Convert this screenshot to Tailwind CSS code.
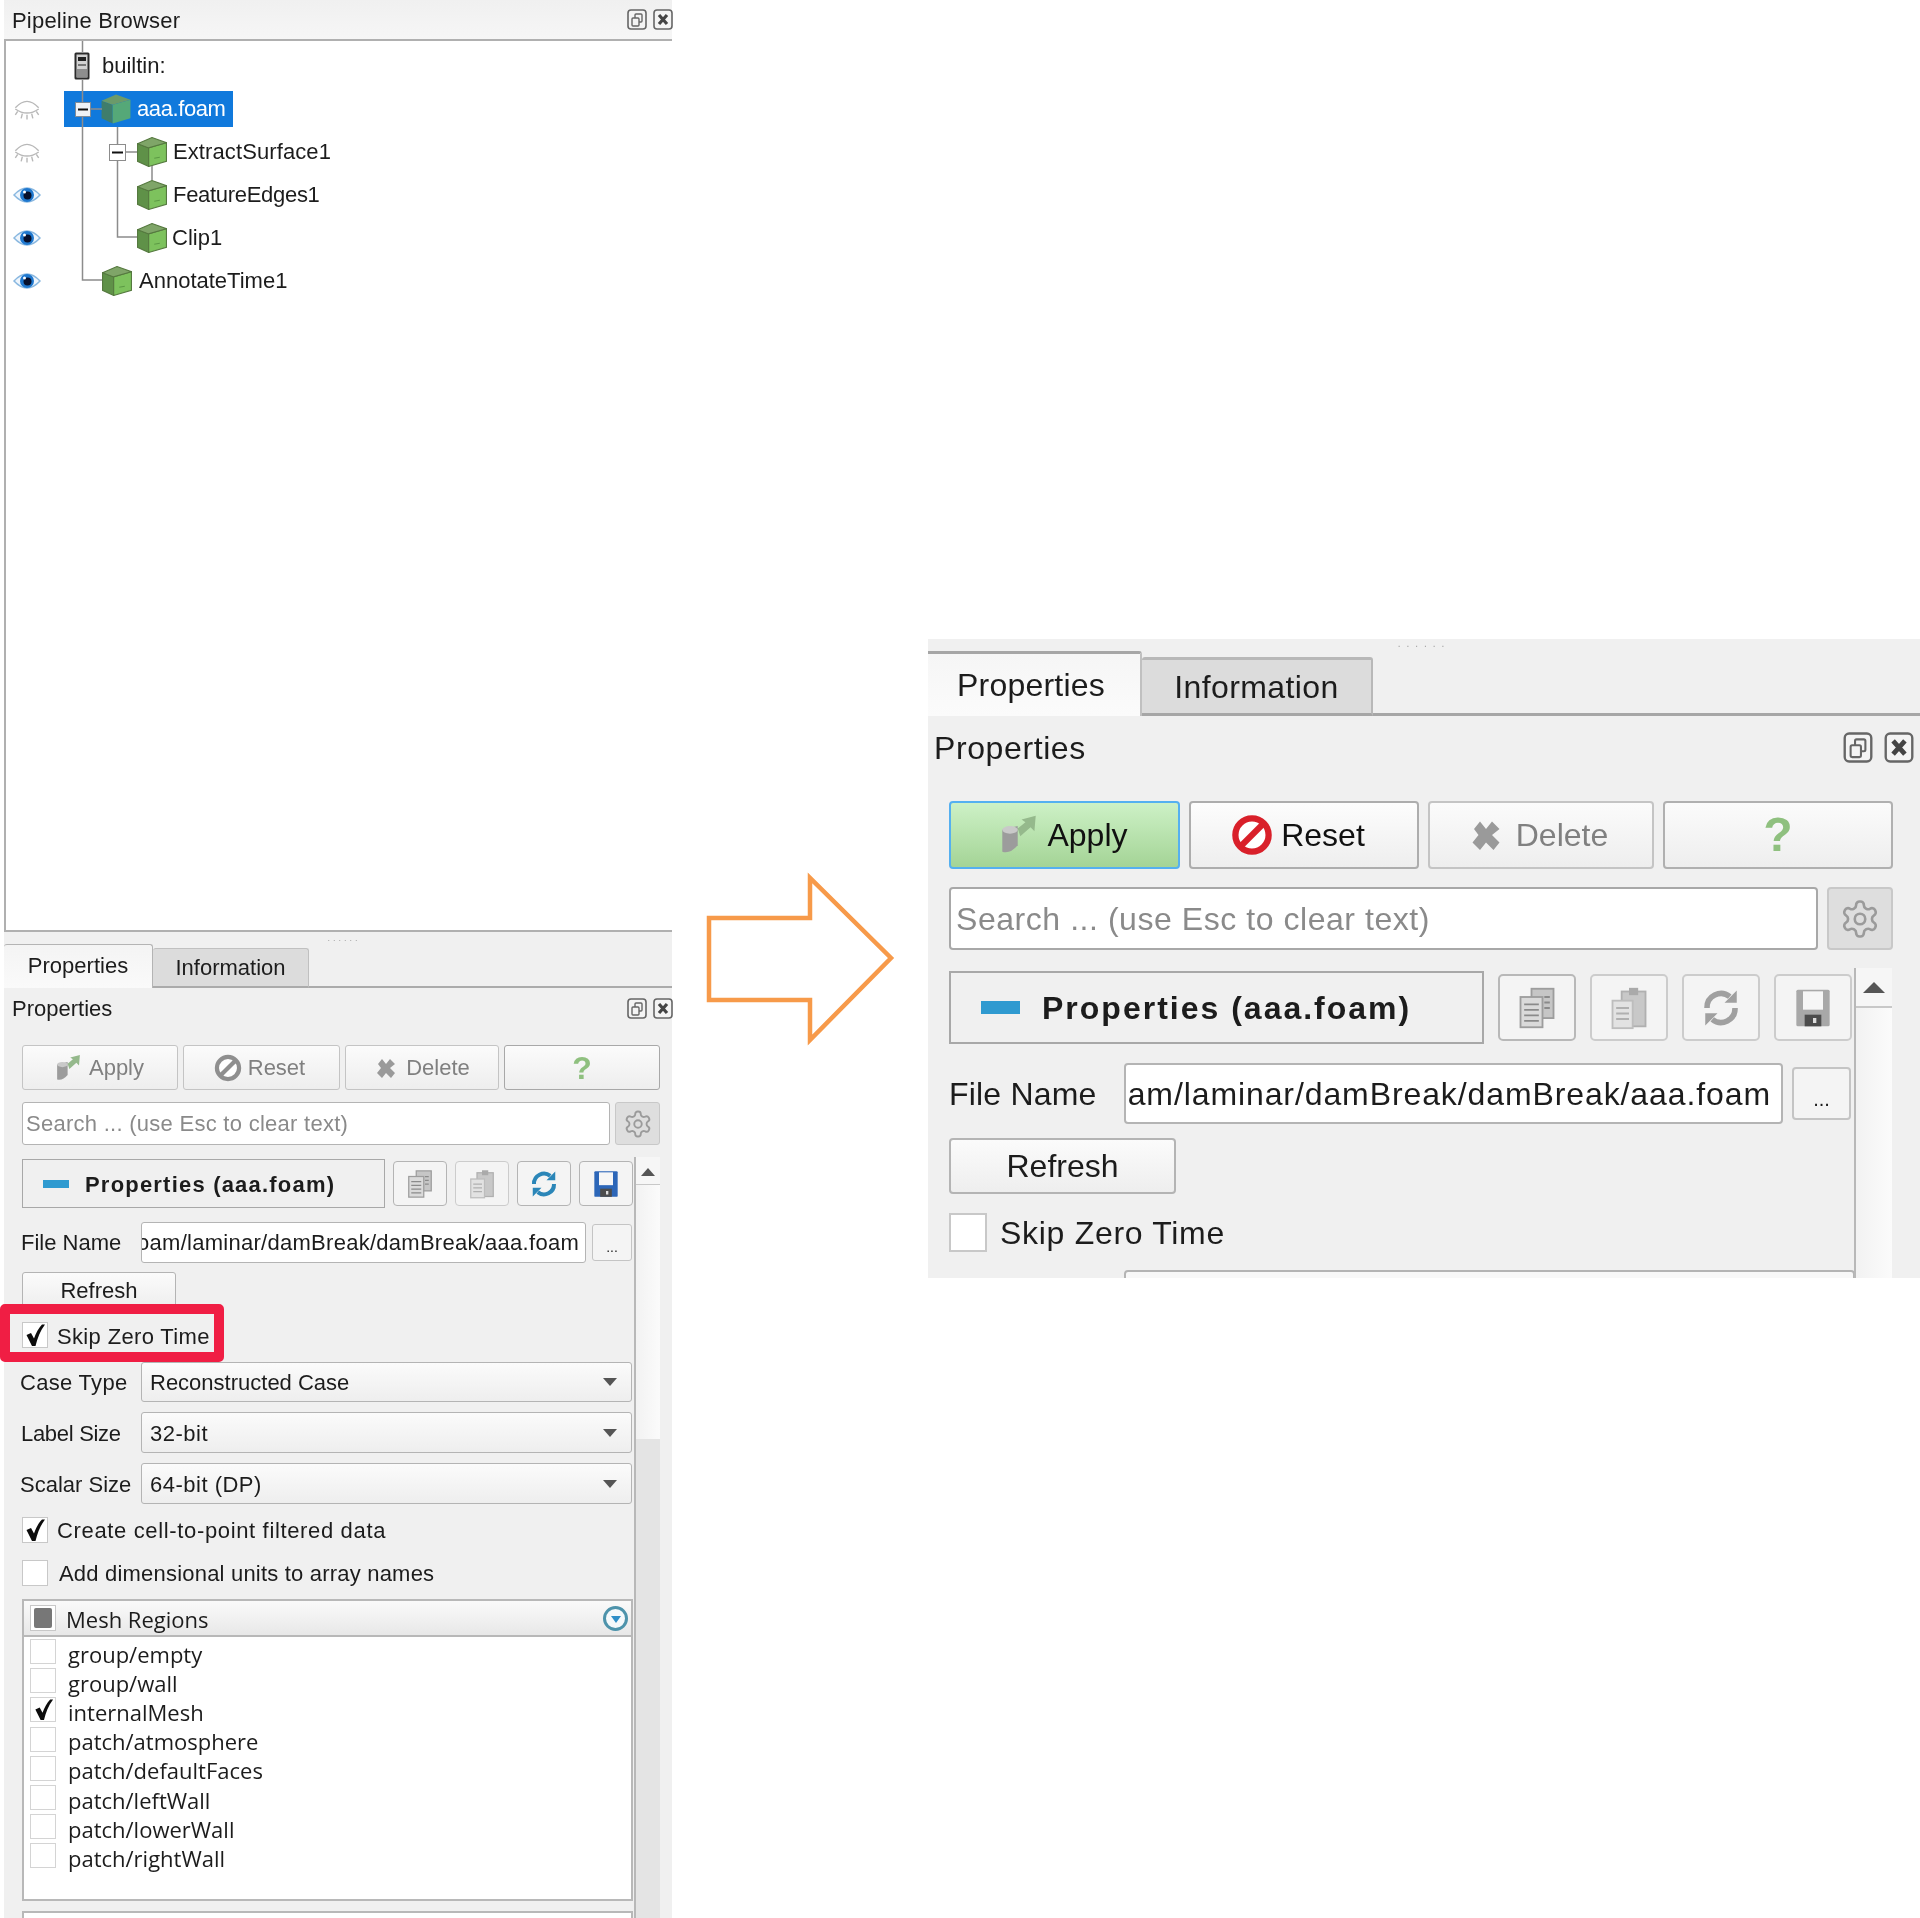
<!DOCTYPE html>
<html>
  <head>
    <meta charset="UTF-8" />
    <title>Pipeline Browser</title>
    <script src="https://cdn.jsdelivr.net/npm/@tailwindcss/browser@4"></script>
  </head>
  <body class="bg-white font-['Liberation_Sans',Arial,sans-serif] text-[#1c1c1c]">
    <!-- Shared icons -->
    <svg class="hidden" xmlns="http://www.w3.org/2000/svg">
      <defs>
        <symbol id="cube" viewBox="1.500 0.500 27 29" preserveAspectRatio="none">
          <polygon points="2,7 12,11 12,29 2,24" fill="#5f9148" stroke="#55793f" />
          <polygon points="12,11 28,6 28,24 12,29" fill="#7dc25d" stroke="#55793f" />
          <polygon points="2,7 15,1 28,6 12,11" fill="#7fa568" stroke="#55793f" />
          <path d="M17 21l5-1" stroke="#5c9a45" fill="none" />
        </symbol>
        <symbol id="cube-sel" viewBox="1.500 0.500 27 29" preserveAspectRatio="none">
          <polygon points="2,7 12,11 12,29 2,24" fill="#3f7d6c" />
          <polygon points="12,11 28,6 28,24 12,29" fill="#55a878" />
          <polygon points="2,7 15,1 28,6 12,11" fill="#6b9a6a" />
        </symbol>
        <symbol id="eye" viewBox="0 0 28 20">
          <path d="M1 10Q14-4 27 10 14 24 1 10Z" fill="#eef5fc" stroke="#8ab8e0" stroke-width="1.5" />
          <circle cx="14" cy="10" r="7" fill="#1f78cf" />
          <circle cx="14.5" cy="10.5" r="4" fill="#07102c" />
          <circle cx="11.5" cy="7" r="1.5" fill="#fff" />
        </symbol>
        <symbol id="eye-off" viewBox="0 0 24 24">
          <g fill="none" stroke="#b8b8b8" stroke-width="1.2">
            <path d="M2 11Q12 0 22 11" />
            <path d="M2 12Q12 19 22 12" />
            <path d="M4 14l-2 3M8 16l-1 4M12 17v4M16 16l1 4M20 14l2 3" />
          </g>
        </symbol>
        <symbol id="server" viewBox="0 0 16 28">
          <rect x="0.5" y="0.5" width="15" height="27" rx="1.5" fill="#2c2c2c" />
          <rect x="2.5" y="2.5" width="11" height="23" fill="#d2d2d2" />
          <rect x="4" y="5" width="8" height="4" fill="#222" />
          <rect x="4" y="12" width="8" height="2" fill="#777" />
          <rect x="3" y="17" width="10" height="8" fill="#8e8e8e" />
        </symbol>
        <symbol id="float" viewBox="0 0 20 21">
          <rect x="1" y="1" width="18" height="19" rx="3" fill="#f4f4f4" stroke="#666" stroke-width="1.6" />
          <rect x="8" y="5" width="7" height="8" rx="1" fill="none" stroke="#666" stroke-width="1.4" />
          <rect x="5" y="9" width="7" height="8" rx="1" fill="#f4f4f4" stroke="#666" stroke-width="1.4" />
        </symbol>
        <symbol id="close" viewBox="0 0 20 21">
          <rect x="1" y="1" width="18" height="19" rx="3" fill="#f4f4f4" stroke="#666" stroke-width="1.6" />
          <path d="M6 6l8 9M14 6l-8 9" stroke="#444" stroke-width="3.2" />
        </symbol>
        <symbol id="check" viewBox="0 0 24 24">
          <path d="M3.500 12l4.500-2 3 5.500C13 10 15.500 5 19 1.500h3C17 8 14.500 15 12.500 23H9Z" fill="#0c0c0c" />
        </symbol>
        <symbol id="apply" viewBox="0 0 28 32">
          <path d="M1 12l12-3v15q-6 7-12 5Z" fill="#9c9c9c" />
          <ellipse cx="7" cy="12" rx="6" ry="3" fill="#c9c9c9" />
          <path d="M13 11l6-5-3-2 11-3-1 12-3-3-8 7Z" fill="#95b98c" />
        </symbol>
        <symbol id="ban" viewBox="0 0 24 24">
          <circle cx="12" cy="12" r="9.500" fill="#fff" stroke="currentColor" stroke-width="3.600" />
          <path d="M5.500 18.500l13-13" stroke="currentColor" stroke-width="3.600" />
        </symbol>
        <symbol id="cross" viewBox="0 0 24 24">
          <path d="M4 8l4-5 4 5 4-5 5 5-5 4 5 5-4 5-5-5-4 5-5-5 4-5Z" fill="#9a9a9a" />
        </symbol>
        <symbol id="gear" viewBox="0 0 24 24">
          <g fill="none" stroke="#9b9b9b" stroke-width="1.500">
            <path d="M12.220 2h-.44a2 2 0 0 0-2 2v.18a2 2 0 0 1-1 1.730l-.43.25a2 2 0 0 1-2 0l-.15-.08a2 2 0 0 0-2.730.73l-.22.38a2 2 0 0 0 .73 2.730l.15.1a2 2 0 0 1 1 1.720v.51a2 2 0 0 1-1 1.740l-.15.09a2 2 0 0 0-.73 2.730l.22.38a2 2 0 0 0 2.730.73l.15-.08a2 2 0 0 1 2 0l.43.25a2 2 0 0 1 1 1.730V20a2 2 0 0 0 2 2h.44a2 2 0 0 0 2-2v-.18a2 2 0 0 1 1-1.730l.43-.25a2 2 0 0 1 2 0l.15.08a2 2 0 0 0 2.730-.73l.22-.39a2 2 0 0 0-.73-2.730l-.15-.08a2 2 0 0 1-1-1.740v-.5a2 2 0 0 1 1-1.740l.15-.09a2 2 0 0 0 .73-2.730l-.22-.38a2 2 0 0 0-2.730-.73l-.15.08a2 2 0 0 1-2 0l-.43-.25a2 2 0 0 1-1-1.730V4a2 2 0 0 0-2-2z" />
            <circle cx="12" cy="12" r="3" />
          </g>
        </symbol>
        <symbol id="copy" viewBox="0 0 24 24">
          <rect x="9" y="1.500" width="12" height="16" fill="#c6c6c6" stroke="#9d9d9d" />
          <rect x="3" y="6" width="12" height="16.500" fill="#dadada" stroke="#9d9d9d" />
          <path d="M5 10h8M5 13h8M5 16h8M5 19h8M16 6h3M16 9h3M16 12h3" stroke="#8a8a8a" />
        </symbol>
        <symbol id="paste" viewBox="0 0 24 24">
          <rect x="8" y="3" width="13" height="19" fill="#c8c8c8" stroke="#b0b0b0" />
          <rect x="3" y="8" width="11" height="15" fill="#e2e2e2" stroke="#bdbdbd" />
          <rect x="12" y="1" width="5" height="4" fill="#aaa" />
          <path d="M5 12h7M5 15h7M5 18h7" stroke="#b0b0b0" />
        </symbol>
        <symbol id="cycle" viewBox="0 0 24 24">
          <g fill="none" stroke="currentColor" stroke-width="3.200">
            <path d="M4 12a8 8 0 0 1 13-6.500" />
            <path d="M20 12a8 8 0 0 1-13 6.500" />
          </g>
          <path d="M14 9h7V2ZM10 15H3v7Z" fill="currentColor" />
        </symbol>
        <symbol id="floppy" viewBox="0 0 24 24">
          <rect x="2" y="1" width="20" height="22" rx="1" fill="currentColor" />
          <rect x="6" y="2" width="12" height="11" fill="#f6f6f6" />
          <rect x="7" y="16" width="10" height="7" fill="#4c4c4c" />
          <rect x="12" y="18" width="2" height="3" fill="#ddd" />
        </symbol>
      </defs>
    </svg>

    <div class="flex items-start w-[1920px] h-[1918px] overflow-hidden">
      <!-- Left: the whole ParaView side bar -->
      <section class="w-[668px] ml-[4px] shrink-0 text-[22px] leading-none blur-[0.5px]">
        <div class="flex items-center justify-between h-[39px] pl-[8px] bg-gradient-to-b from-[#f0f0f0] to-[#f6f6f6]">
          <span class="pt-[2px] tracking-[0.2px]">Pipeline Browser</span>
          <div class="flex items-center gap-[6px]">
            <svg class="w-[20px] h-[21px]"><use href="#float" /></svg>
            <svg class="w-[20px] h-[21px] -mr-px"><use href="#close" /></svg>
          </div>
        </div>

        <div class="relative h-[893px] pt-[3px] bg-white border-y-2 border-l-2 border-[#b0b0b0]">
          <div class="flex items-center h-[43px] pl-[7px]">
            <div class="w-[28px]"></div>
            <div class="w-[33px]"></div>
            <svg class="w-[16px] h-[28px]"><use href="#server" /></svg>
            <span class="ml-[12px]">builtin:</span>
          </div>
          <div class="flex items-center h-[43px] pl-[7px]">
            <svg class="w-[28px] h-[28px]"><use href="#eye-off" /></svg>
            <div class="flex items-center h-[36px] w-[169px] ml-[23px] bg-[#1079dc] text-white">
              <svg class="w-[30px] h-[30px] ml-[37px]"><use href="#cube-sel" /></svg>
              <span class="ml-[6px] tracking-[-0.4px]">aaa.foam</span>
            </div>
          </div>
          <div class="flex items-center h-[43px] pl-[7px]">
            <svg class="w-[28px] h-[28px]"><use href="#eye-off" /></svg>
            <svg class="w-[30px] h-[30px] ml-[96px]"><use href="#cube" /></svg>
            <span class="ml-[6px] tracking-[0.1px]">ExtractSurface1</span>
          </div>
          <div class="flex items-center h-[43px] pl-[7px]">
            <svg class="w-[28px] h-[20px]"><use href="#eye" /></svg>
            <svg class="w-[30px] h-[30px] ml-[96px]"><use href="#cube" /></svg>
            <span class="ml-[6px] tracking-[-0.3px]">FeatureEdges1</span>
          </div>
          <div class="flex items-center h-[43px] pl-[7px]">
            <svg class="w-[28px] h-[20px]"><use href="#eye" /></svg>
            <svg class="w-[30px] h-[30px] ml-[96px]"><use href="#cube" /></svg>
            <span class="ml-[5px]">Clip1</span>
          </div>
          <div class="flex items-center h-[43px] pl-[7px]">
            <svg class="w-[28px] h-[20px]"><use href="#eye" /></svg>
            <svg class="w-[30px] h-[30px] ml-[61px]"><use href="#cube" /></svg>
            <span class="ml-[7px]">AnnotateTime1</span>
          </div>

          <!-- Tree connectors and expanders -->
          <svg class="absolute left-0 top-0 w-[300px] h-[260px]" viewBox="6 41 300 260">
            <g fill="none" stroke="#8c8c8c" stroke-width="1.500">
              <path d="M82.500 41V52M82.500 80V103M82.500 117V280H102M90 109h12" />
              <path d="M117.500 127V144M117.500 161V237H137M126 152h11M152 166V180" />
            </g>
            <rect x="75.500" y="102.500" width="15" height="14" fill="#eef2f6" stroke="#7f8c99" />
            <path d="M78 109.500h10" stroke="#111" stroke-width="2" />
            <rect x="109.500" y="144.500" width="16" height="16" fill="#fff" stroke="#8c8c8c" />
            <path d="M112 152.500h11" stroke="#111" stroke-width="2" />
          </svg>
        </div>

        <div class="h-[986px] bg-[#f0f0f0]">
          <div class="flex justify-center h-[12px] pt-[2px] pl-[12px]">
            <span class="text-[#a0a0a0] text-[9px] tracking-[3px] leading-none">......</span>
          </div>

          <div class="flex items-end h-[44px]">
            <div class="flex items-center justify-center w-[149px] h-[44px] pb-[1px] bg-gradient-to-b from-[#f4f4f4] to-[#fafafa] border-t border-r border-[#b4b4b4] rounded-t-[3px]">Properties</div>
            <div class="flex items-center justify-center w-[156px] h-[40px] bg-[#dcdcdc] border-t border-r border-[#c0c0c0] rounded-t-[3px] border-b-2 border-b-[#ababab]">Information</div>
            <div class="flex-1 h-[2px] bg-[#ababab]"></div>
          </div>

          <div class="flex items-center justify-between h-[40px] pl-[8px]">
            <span class="pt-[2px]">Properties</span>
            <div class="flex items-center gap-[6px]">
              <svg class="w-[20px] h-[21px]"><use href="#float" /></svg>
              <svg class="w-[20px] h-[21px] -mr-px"><use href="#close" /></svg>
            </div>
          </div>

          <div class="pl-[18px] pt-[17px]">
            <!-- Action buttons -->
            <div class="flex gap-[5px] h-[45px]">
              <button class="flex items-center justify-center gap-[8px] w-[156px] bg-gradient-to-b from-[#fbfbfb] to-[#eeeeee] border border-[#c4c4c4] rounded-[3px] text-[#808080]">
                <svg class="w-[25px] h-[28px]"><use href="#apply" /></svg>Apply
              </button>
              <button class="flex items-center justify-center gap-[6px] w-[157px] pr-[4px] bg-gradient-to-b from-[#fbfbfb] to-[#eeeeee] border border-[#c4c4c4] rounded-[3px] text-[#808080]">
                <svg class="w-[28px] h-[28px] text-[#8f8f8f]"><use href="#ban" /></svg>Reset
              </button>
              <button class="flex items-center justify-center gap-[8px] w-[154px] bg-gradient-to-b from-[#fbfbfb] to-[#eeeeee] border border-[#c4c4c4] rounded-[3px] text-[#808080]">
                <svg class="w-[24px] h-[26px]"><use href="#cross" /></svg>Delete
              </button>
              <button class="w-[156px] bg-gradient-to-b from-[#fbfbfb] to-[#eeeeee] border border-[#a8a8a8] rounded-[3px] text-[32px] font-bold text-[#8fc07f]">?</button>
            </div>

            <div class="flex gap-[5px] h-[43px] mt-[12px]">
              <div class="flex items-center w-[588px] pl-[3px] bg-white border border-[#b4b4b4] rounded-[3px] text-[#8a8a8a] tracking-[0.27px]">Search ... (use Esc to clear text)</div>
              <div class="flex items-center justify-center w-[45px] bg-[#dedede] border border-[#c8c8c8] rounded-[3px]">
                <svg class="w-[30px] h-[32px]"><use href="#gear" /></svg>
              </div>
            </div>

            <div class="flex items-stretch mt-[12px]">
              <div class="w-[612px] pt-[2px]">
                <div class="flex items-center gap-[8px]">
                  <div class="flex items-center w-[363px] h-[49px] pl-[20px] border border-[#a8a8a8] font-bold tracking-[1.2px]">
                    <div class="w-[26px] h-[8px] bg-[#2f9ad0]"></div>
                    <span class="ml-[16px] pt-[2px]">Properties (aaa.foam)</span>
                  </div>
                  <button class="flex items-center justify-center w-[54px] h-[45px] border border-[#b4b4b4] rounded-[4px] bg-[#f4f4f4]">
                    <svg class="w-[30px] h-[36px]"><use href="#copy" /></svg>
                  </button>
                  <button class="flex items-center justify-center w-[54px] h-[45px] border border-[#cccccc] rounded-[4px] bg-[#f4f4f4]">
                    <svg class="w-[30px] h-[36px]"><use href="#paste" /></svg>
                  </button>
                  <button class="flex items-center justify-center w-[54px] h-[45px] border border-[#b4b4b4] rounded-[4px] bg-[#f4f4f4]">
                    <svg class="w-[30px] h-[32px] text-[#2b86b8]"><use href="#cycle" /></svg>
                  </button>
                  <button class="flex items-center justify-center w-[54px] h-[45px] border border-[#b4b4b4] rounded-[4px] bg-[#f4f4f4]">
                    <svg class="w-[28px] h-[32px] text-[#2c66b8]"><use href="#floppy" /></svg>
                  </button>
                </div>

                <div class="flex items-center mt-[14px] h-[41px]">
                  <span class="w-[120px] -ml-px">File Name</span>
                  <div class="flex items-center justify-end w-[445px] h-[41px] pr-[6px] bg-white border border-[#b4b4b4] rounded-[3px] overflow-hidden whitespace-nowrap tracking-[0.27px]"><span class="shrink-0">foam/laminar/damBreak/damBreak/aaa.foam</span></div>
                  <button class="w-[40px] h-[37px] ml-[6px] pt-[8px] text-[14px] bg-[#f4f4f4] border border-[#c4c4c4] rounded-[3px]">...</button>
                </div>

                <button class="block w-[154px] h-[37px] mt-[9px] bg-gradient-to-b from-[#fbfbfb] to-[#eeeeee] border border-[#b4b4b4] rounded-[3px]">Refresh</button>

                <div class="relative flex items-center h-[26px] mt-[13px]">
                  <div class="flex items-center justify-center w-[26px] h-[26px] bg-white border border-[#c8c8c8]">
                    <svg class="w-[24px] h-[24px]"><use href="#check" /></svg>
                  </div>
                  <span class="ml-[9px] pt-[4px] tracking-[0.35px]">Skip Zero Time</span>
                  <!-- Annotation box round the checkbox -->
                  <div class="absolute -left-[22px] -top-[18px] w-[224px] h-[58px] border-[10px] border-[#f01e44] rounded-[5px]"></div>
                </div>

                <div class="flex items-center h-[40px] mt-[14px]">
                  <span class="w-[119px] -ml-[2px] mr-[2px] pt-[2px] tracking-[0.3px]">Case Type</span>
                  <div class="flex items-center justify-between w-[491px] h-[40px] pl-[8px] pr-[14px] bg-gradient-to-b from-[#fbfbfb] to-[#eeeeee] border border-[#b4b4b4] rounded-[3px]">
                    <span class="pt-[2px]">Reconstructed Case</span>
                    <div class="w-0 h-0 border-x-[7px] border-x-transparent border-t-[8px] border-t-[#555555]"></div>
                  </div>
                </div>
                <div class="flex items-center h-[41px] mt-[10px]">
                  <span class="w-[120px] -ml-px pt-[2px] tracking-[-0.3px]">Label Size</span>
                  <div class="flex items-center justify-between w-[491px] h-[41px] pl-[8px] pr-[14px] bg-gradient-to-b from-[#fbfbfb] to-[#eeeeee] border border-[#b4b4b4] rounded-[3px]">
                    <span class="pt-[2px] tracking-[0.5px]">32-bit</span>
                    <div class="w-0 h-0 border-x-[7px] border-x-transparent border-t-[8px] border-t-[#555555]"></div>
                  </div>
                </div>
                <div class="flex items-center h-[41px] mt-[10px]">
                  <span class="w-[119px] -ml-[2px] mr-[2px] pt-[2px]">Scalar Size</span>
                  <div class="flex items-center justify-between w-[491px] h-[41px] pl-[8px] pr-[14px] bg-gradient-to-b from-[#fbfbfb] to-[#eeeeee] border border-[#b4b4b4] rounded-[3px]">
                    <span class="pt-[2px] tracking-[0.5px]">64-bit (DP)</span>
                    <div class="w-0 h-0 border-x-[7px] border-x-transparent border-t-[8px] border-t-[#555555]"></div>
                  </div>
                </div>

                <div class="flex items-center h-[26px] mt-[13px]">
                  <div class="flex items-center justify-center w-[26px] h-[26px] bg-white border border-[#c8c8c8]">
                    <svg class="w-[24px] h-[24px]"><use href="#check" /></svg>
                  </div>
                  <span class="ml-[9px] pt-[2px] tracking-[0.65px]">Create cell-to-point filtered data</span>
                </div>
                <div class="flex items-center h-[26px] mt-[17px]">
                  <div class="w-[26px] h-[26px] bg-white border border-[#c8c8c8]"></div>
                  <span class="ml-[11px] pt-[2px] tracking-[0.2px]">Add dimensional units to array names</span>
                </div>

                <!-- Mesh Regions table -->
                <div class="w-[611px] h-[302px] mt-[13px] bg-white border-2 border-[#b8b8b8] font-['Open_Sans',sans-serif] text-[22px]">
                  <div class="flex items-center h-[36px] pl-[6px] pr-[2px] bg-gradient-to-b from-[#fafafa] to-[#e8e8e8] border-b-2 border-[#b8b8b8]">
                    <div class="flex items-center justify-center w-[26px] h-[26px] bg-white border border-[#c8c8c8]">
                      <div class="w-[18px] h-[20px] bg-[#777777] rounded-[2px]"></div>
                    </div>
                    <span class="ml-[10px] flex-1 pt-[2px]">Mesh Regions</span>
                    <div class="flex items-center justify-center w-[25px] h-[25px] mr-[1px] rounded-full border-[3px] border-[#4d93ab] bg-[#f5f9fb]">
                      <div class="w-0 h-0 mt-[2px] border-x-[5px] border-x-transparent border-t-[7px] border-t-[#2f8fc8]"></div>
                    </div>
                  </div>
                  <div class="flex items-center h-[29.200px] pl-[6px]"><div class="w-[26px] h-[25px] border border-[#d4d4d4]"></div><span class="ml-[12px] pt-[4px]">group/empty</span></div>
                  <div class="flex items-center h-[29.200px] pl-[6px]"><div class="w-[26px] h-[25px] border border-[#d4d4d4]"></div><span class="ml-[12px] pt-[4px]">group/wall</span></div>
                  <div class="flex items-center h-[29.200px] pl-[6px]"><div class="flex items-center justify-center w-[26px] h-[25px] border border-[#d4d4d4]"><svg class="w-[23px] h-[23px]"><use href="#check" /></svg></div><span class="ml-[12px] pt-[4px]">internalMesh</span></div>
                  <div class="flex items-center h-[29.200px] pl-[6px]"><div class="w-[26px] h-[25px] border border-[#d4d4d4]"></div><span class="ml-[12px] pt-[4px]">patch/atmosphere</span></div>
                  <div class="flex items-center h-[29.200px] pl-[6px]"><div class="w-[26px] h-[25px] border border-[#d4d4d4]"></div><span class="ml-[12px] pt-[4px]">patch/defaultFaces</span></div>
                  <div class="flex items-center h-[29.200px] pl-[6px]"><div class="w-[26px] h-[25px] border border-[#d4d4d4]"></div><span class="ml-[12px] pt-[4px]">patch/leftWall</span></div>
                  <div class="flex items-center h-[29.200px] pl-[6px]"><div class="w-[26px] h-[25px] border border-[#d4d4d4]"></div><span class="ml-[12px] pt-[4px]">patch/lowerWall</span></div>
                  <div class="flex items-center h-[29.200px] pl-[6px]"><div class="w-[26px] h-[25px] border border-[#d4d4d4]"></div><span class="ml-[12px] pt-[4px]">patch/rightWall</span></div>
                </div>
                <div class="w-[611px] h-[40px] mt-[10px] bg-white border-2 border-[#b8b8b8]"></div>
              </div>

              <!-- Scrollbar -->
              <div class="flex flex-col w-[26px] border-l-2 border-[#b8b8b8]">
                <div class="flex justify-center h-[28px] pt-[11px] bg-[#f6f6f6] border-b border-[#c8c8c8]">
                  <div class="w-0 h-0 border-x-[7px] border-x-transparent border-b-[8px] border-b-[#555555]"></div>
                </div>
                <div class="h-[254px] bg-gradient-to-r from-[#f2f2f2] to-[#fbfbfb]"></div>
                <div class="flex-1 bg-[#e4e4e4]"></div>
              </div>
            </div>
          </div>
        </div>
      </section>

      <!-- Arrow between the two views -->
      <svg class="w-[193px] h-[180px] ml-[33px] mt-[868px] shrink-0" viewBox="705 868 193 180">
        <polygon points="709,918 810,918 810,878 891,958 810,1040 810,1000 709,1000" fill="#fff" stroke="#f79a4a" stroke-width="4.500" />
      </svg>

      <!-- Right: enlarged view with Skip Zero Time off -->
      <section class="w-[992px] h-[639px] ml-[30px] mt-[639px] shrink-0 overflow-hidden bg-[#f0f0f0] text-[32px] leading-none blur-[0.7px]">
        <div class="flex justify-center h-[12px]">
          <span class="text-[#a0a0a0] text-[10px] tracking-[6px] leading-none">......</span>
        </div>

        <div class="flex items-end h-[65px]">
          <div class="flex items-center justify-center w-[214px] h-[65px] pr-[6px] bg-gradient-to-b from-[#f6f6f6] to-[#fbfbfb] border-t-[3px] border-r-2 border-[#a6a6a6] border-r-[#c0c0c0] rounded-tr-[3px] tracking-[0.2px]">Properties</div>
          <div class="flex items-center justify-center w-[231px] h-[59px] bg-[#dcdcdc] border-t-[3px] border-r-2 border-b-[3px] border-[#b8b8b8] border-b-[#a6a6a6] rounded-t-[3px] tracking-[0.4px]">Information</div>
          <div class="flex-1 h-[3px] bg-[#a6a6a6]"></div>
        </div>

        <div class="flex items-center justify-between h-[63px] pl-[6px] pr-[5px]">
          <span class="tracking-[0.6px]">Properties</span>
          <div class="flex items-center gap-[10px]">
            <svg class="w-[30px] h-[31px]"><use href="#float" /></svg>
            <svg class="w-[32px] h-[31px]"><use href="#close" /></svg>
          </div>
        </div>

        <div class="pl-[21px] pt-[22px]">
          <div class="flex gap-[9px] h-[68px]">
            <button class="flex items-center justify-center gap-[10px] w-[231px] bg-gradient-to-b from-[#cdf1c6] to-[#a4d496] border-2 border-[#55b0f0] rounded-[4px] text-[#111111]">
              <svg class="w-[36px] h-[42px]"><use href="#apply" /></svg>Apply
            </button>
            <button class="flex items-center justify-center gap-[8px] w-[230px] pr-[12px] bg-gradient-to-b from-[#fdfdfd] to-[#eeeeee] border-2 border-[#adadad] rounded-[4px] text-[#111111]">
              <svg class="w-[42px] h-[42px] text-[#d9202a]"><use href="#ban" /></svg>Reset
            </button>
            <button class="flex items-center justify-center gap-[12px] w-[226px] pr-[6px] bg-gradient-to-b from-[#fbfbfb] to-[#eeeeee] border-2 border-[#c4c4c4] rounded-[4px] text-[#808080]">
              <svg class="w-[36px] h-[38px]"><use href="#cross" /></svg>Delete
            </button>
            <button class="w-[230px] bg-gradient-to-b from-[#fbfbfb] to-[#eeeeee] border-2 border-[#b0b0b0] rounded-[4px] text-[48px] font-bold text-[#8fc07f]">?</button>
          </div>

          <div class="flex gap-[9px] h-[63px] mt-[18px]">
            <div class="flex items-center w-[869px] pl-[5px] bg-white border-2 border-[#a8a8a8] rounded-[4px] text-[#8a8a8a] tracking-[0.55px]">Search ... (use Esc to clear text)</div>
            <div class="flex items-center justify-center w-[66px] bg-[#dedede] border-2 border-[#c8c8c8] rounded-[4px]">
              <svg class="w-[42px] h-[46px]"><use href="#gear" /></svg>
            </div>
          </div>

          <div class="flex items-stretch mt-[19px]">
            <div class="w-[905px] pt-[2px]">
              <div class="flex items-center gap-[14px]">
                <div class="flex items-center w-[535px] h-[73px] pl-[30px] border-2 border-[#a8a8a8] font-bold tracking-[2px]">
                  <div class="w-[39px] h-[13px] bg-[#2f9ad0]"></div>
                  <span class="ml-[22px]">Properties (aaa.foam)</span>
                </div>
                <button class="flex items-center justify-center w-[78px] h-[67px] border-2 border-[#b8b8b8] rounded-[5px] bg-[#f4f4f4]">
                  <svg class="w-[44px] h-[52px]"><use href="#copy" /></svg>
                </button>
                <button class="flex items-center justify-center w-[78px] h-[67px] border-2 border-[#cccccc] rounded-[5px] bg-[#f4f4f4]">
                  <svg class="w-[44px] h-[52px]"><use href="#paste" /></svg>
                </button>
                <button class="flex items-center justify-center w-[78px] h-[67px] border-2 border-[#cccccc] rounded-[5px] bg-[#f4f4f4]">
                  <svg class="w-[42px] h-[46px] text-[#a0a0a0]"><use href="#cycle" /></svg>
                </button>
                <button class="flex items-center justify-center w-[78px] h-[67px] border-2 border-[#cccccc] rounded-[5px] bg-[#f4f4f4]">
                  <svg class="w-[40px] h-[46px] text-[#a8a8a8]"><use href="#floppy" /></svg>
                </button>
              </div>

              <div class="flex items-center h-[61px] mt-[19px]">
                <span class="w-[175px] tracking-[0.2px]">File Name</span>
                <div class="flex items-center justify-end w-[659px] h-[61px] pr-[10px] bg-white border-2 border-[#b4b4b4] rounded-[4px] overflow-hidden whitespace-nowrap tracking-[0.9px]"><span class="shrink-0">foam/laminar/damBreak/damBreak/aaa.foam</span></div>
                <button class="w-[59px] h-[53px] ml-[9px] pt-[10px] text-[20px] bg-[#f4f4f4] border-2 border-[#c4c4c4] rounded-[4px]">...</button>
              </div>

              <button class="block w-[227px] h-[56px] mt-[14px] bg-gradient-to-b from-[#fbfbfb] to-[#eeeeee] border-2 border-[#b4b4b4] rounded-[4px]">Refresh</button>

              <div class="flex items-center h-[39px] mt-[19px]">
                <div class="w-[38px] h-[39px] bg-white border-2 border-[#c8c8c8]"></div>
                <span class="ml-[13px] tracking-[0.7px]">Skip Zero Time</span>
              </div>

              <div class="w-[731px] h-[40px] ml-[175px] mt-[18px] bg-[#f8f8f8] border-2 border-[#b4b4b4] rounded-[4px]"></div>
            </div>

            <div class="flex flex-col w-[38px] -mt-[1px] border-l-2 border-[#b8b8b8]">
              <div class="flex justify-center h-[40px] pt-[14px] bg-[#f6f6f6] border-b-2 border-[#c8c8c8]">
                <div class="w-0 h-0 border-x-[11px] border-x-transparent border-b-[11px] border-b-[#555555]"></div>
              </div>
              <div class="flex-1 bg-gradient-to-r from-[#f2f2f2] to-[#fbfbfb]"></div>
            </div>
          </div>
        </div>
      </section>
    </div>
  </body>
</html>
